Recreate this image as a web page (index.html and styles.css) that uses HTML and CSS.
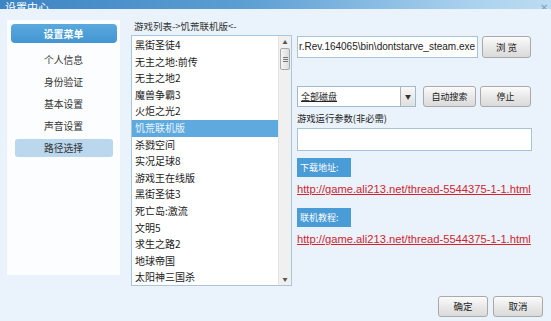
FILE: index.html
```html
<!DOCTYPE html>
<html>
<head>
<meta charset="utf-8">
<link rel="stylesheet" href="styles.css">
</head>
<body>
<div class="window">
  <div class="titlebar">
    <span class="title">设置中心</span>
    <span class="close">✕</span>
  </div>
  <div class="main">
    <div class="sidebar">
      <div class="side-head">设置菜单</div>
      <div class="side-item">个人信息</div>
      <div class="side-item">身份验证</div>
      <div class="side-item">基本设置</div>
      <div class="side-item">声音设置</div>
      <div class="side-item active">路径选择</div>
    </div>
    <div class="center">
      <div class="list-label">游戏列表-&gt;饥荒联机版&lt;-</div>
      <div class="listbox">
        <ul class="items">
          <li>黑街圣徒4</li>
          <li>无主之地:前传</li>
          <li>无主之地2</li>
          <li>魔兽争霸3</li>
          <li>火炬之光2</li>
          <li class="sel">饥荒联机版</li>
          <li>杀戮空间</li>
          <li>实况足球8</li>
          <li>游戏王在线版</li>
          <li>黑街圣徒3</li>
          <li>死亡岛:激流</li>
          <li>文明5</li>
          <li>求生之路2</li>
          <li>地球帝国</li>
          <li>太阳神三国杀</li>
        </ul>
        <div class="scrollbar">
          <div class="sb-arrow">▲</div>
          <div class="sb-thumb"><span></span><span></span><span></span></div>
          <div class="sb-track"></div>
          <div class="sb-arrow">▼</div>
        </div>
      </div>
    </div>
    <div class="right">
      <div class="row path-row">
        <div class="textbox path">r.Rev.164065\bin\dontstarve_steam.exe</div>
        <div class="btn btn-browse">浏 览</div>
      </div>
      <div class="row disk-row">
        <div class="combo"><span class="combo-text">全部磁盘</span><span class="combo-arrow">▼</span></div>
        <div class="btn btn-search">自动搜索</div>
        <div class="btn btn-stop">停止</div>
      </div>
      <div class="param-label">游戏运行参数(非必需)</div>
      <div class="textbox param"></div>
      <div class="tag">下载地址:</div>
      <div class="link">http://game.ali213.net/thread-5544375-1-1.html</div>
      <div class="tag tag2">联机教程:</div>
      <div class="link">http://game.ali213.net/thread-5544375-1-1.html</div>
    </div>
  </div>
  <div class="footer">
    <div class="btn btn-foot">确定</div>
    <div class="btn btn-foot">取消</div>
  </div>
</div>
</body>
</html>
```
FILE: styles.css
```css
* { box-sizing: border-box; }
html, body { margin: 0; padding: 0; }
body {
  font-family: "Noto Sans CJK SC", "Liberation Sans", sans-serif;
  font-size: 10px;
  color: #222;
  background: #eaf3fc;
}
.window {
  width: 551px;
  height: 321px;
  background: #eaf3fc;
  overflow: hidden;
  display: flex;
  flex-direction: column;
}
.titlebar {
  height: 9px;
  flex: none;
  background: linear-gradient(to right, #3d84c3 0%, #5c9fd3 45%, #a9d1ee 85%, #bcdcf2 100%);
  overflow: hidden;
  display: flex;
  justify-content: space-between;
  align-items: flex-end;
}
.title {
  color: #fff;
  font-size: 11px;
  line-height: 13px;
  margin-left: 5px;
  margin-bottom: -5px;
}
.close {
  color: #7a9fbd;
  font-size: 10px;
  line-height: 10px;
  margin-right: 3px;
  margin-bottom: -3px;
}
.main {
  height: 278px;
  flex: none;
  display: flex;
}
.sidebar {
  width: 113px;
  height: 255px;
  margin: 11px 0 0 7px;
  background: #fbfdff;
  padding-top: 4px;
  display: flex;
  flex-direction: column;
  align-items: center;
}
.side-head {
  width: 106px;
  height: 19px;
  line-height: 19px;
  text-align: center;
  color: #fff;
  font-size: 10px;
  font-weight: bold;
  background: linear-gradient(#5aa9de, #4396d2);
  border-radius: 4px;
  margin-bottom: 4px;
}
.side-item {
  width: 98px;
  height: 18px;
  line-height: 18px;
  margin-top: 4px;
  text-align: center;
  color: #333;
  font-size: 9.8px;
  border-radius: 3px;
}
.side-item.active {
  background: #bad7ed;
}
.center {
  width: 161px;
  margin-left: 11px;
  padding-top: 10px;
}
.list-label {
  height: 14px;
  line-height: 14px;
  font-size: 9.5px;
  color: #333;
  margin-left: 3px;
  margin-bottom: 2px;
}
.listbox {
  height: 251px;
  border: 1px solid #a9c6de;
  background: #fff;
  display: flex;
}
.items {
  list-style: none;
  margin: 0;
  padding: 1px 0 0 0;
  flex: 1;
}
.items li {
  height: 16.6px;
  line-height: 16.6px;
  padding-left: 3px;
  font-size: 10px;
  color: #1a1a1a;
  white-space: nowrap;
}
.items li.sel {
  background: #5eaade;
  color: #e8f3fb;
}
.scrollbar {
  width: 13px;
  background: #f0f0f0;
  border-left: 1px solid #e4e4e4;
  display: flex;
  flex-direction: column;
}
.sb-arrow {
  height: 12px;
  font-size: 5px;
  line-height: 12px;
  text-align: center;
  color: #555;
}
.sb-thumb {
  height: 22px;
  margin: 0 1px;
  border: 1px solid #a8a8a8;
  border-radius: 2px;
  background: linear-gradient(to right, #f4f4f4, #dcdcdc);
  display: flex;
  flex-direction: column;
  justify-content: center;
  align-items: center;
  gap: 1px;
}
.sb-thumb span {
  width: 5px;
  height: 1px;
  background: #777;
}
.sb-track { flex: 1; }
.right {
  width: 235px;
  margin-left: 5px;
  padding-top: 27px;
  display: flex;
  flex-direction: column;
}
.row { display: flex; align-items: center; }
.textbox {
  border: 1px solid #a7c3d9;
  background: #fff;
}
.path {
  width: 181px;
  height: 22px;
  line-height: 20px;
  padding-left: 1px;
  font-family: "Liberation Sans", sans-serif;
  font-size: 10px;
  color: #222;
  white-space: nowrap;
  overflow: hidden;
}
.btn {
  height: 21px;
  line-height: 19px;
  text-align: center;
  font-size: 9px;
  color: #222;
  border: 1px solid #a9a9a9;
  border-radius: 3px;
  background: linear-gradient(#fbfbfb, #e9e9e9 50%, #dadada);
}
.btn-browse { width: 49px; margin-left: 4px; height: 22px; line-height: 20px; font-size: 9.5px; }
.disk-row { margin-top: 28px; }
.combo {
  width: 119px;
  height: 21px;
  border: 1px solid #9fb9cf;
  background: #fff;
  display: flex;
  align-items: center;
  justify-content: space-between;
}
.combo-text {
  font-size: 9px;
  margin-left: 3px;
  text-decoration: underline;
  color: #222;
}
.combo-arrow {
  width: 15px;
  height: 19px;
  border-left: 1px solid #b0b0b0;
  background: linear-gradient(#f8f8f8, #e0e0e0);
  font-size: 6px;
  line-height: 19px;
  text-align: center;
  color: #333;
}
.btn-search { width: 53px; margin-left: 7px; }
.btn-stop { width: 51px; margin-left: 4px; }
.param-label {
  margin-top: 4px;
  height: 14px;
  line-height: 14px;
  font-size: 9.3px;
  color: #222;
}
.param {
  width: 235px;
  height: 23px;
  margin-top: 3px;
}
.tag {
  width: 54px;
  height: 19px;
  line-height: 19px;
  margin-top: 7px;
  background: #4a9cd6;
  color: #fff;
  font-size: 9px;
  padding-left: 3px;
}
.tag2 { margin-top: 11px; }
.link {
  margin-top: 5px;
  height: 15px;
  line-height: 15px;
  font-family: "Liberation Sans", sans-serif;
  font-size: 11.2px;
  color: #d2232e;
  text-decoration: underline;
  white-space: nowrap;
}
.footer {
  display: flex;
  justify-content: flex-end;
  padding: 9px 8px 0 0;
}
.btn-foot { width: 50px; margin-left: 5px; font-size: 9.5px; }
```
